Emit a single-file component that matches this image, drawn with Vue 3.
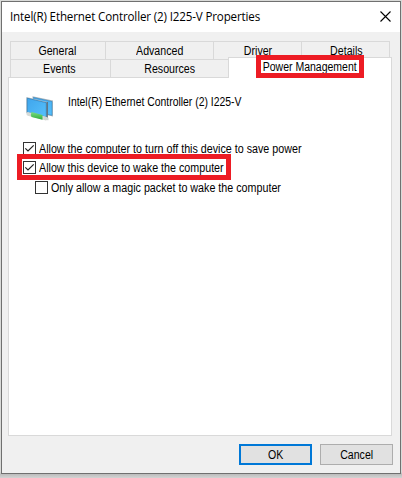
<script setup>
const backTabs = [
  { label: 'General', cls: 'general' },
  { label: 'Advanced', cls: 'advanced' },
  { label: 'Driver', cls: 'driver' },
  { label: 'Details', cls: 'details' },
]
const options = [
  { label: 'Allow the computer to turn off this device to save power', checked: true, cls: 'opt-power' },
  { label: 'Allow this device to wake the computer', checked: true, cls: 'opt-wake', marked: true },
  { label: 'Only allow a magic packet to wake the computer', checked: false, cls: 'opt-magic' },
]
</script>

<template>
  <div class="desktop">
    <div class="window">
      <header class="titlebar">
        <span class="title">Intel(R) Ethernet Controller (2) I225-V Properties</span>
        <svg class="close" width="11" height="11" viewBox="0 0 11 11">
          <path d="M.5 .5 L10.5 10.5 M10.5 .5 L.5 10.5" stroke="#000" stroke-width="1.1" fill="none" />
        </svg>
      </header>
      <div class="tabs">
        <div class="row back">
          <div v-for="t in backTabs" :key="t.label" class="tab" :class="t.cls"><span>{{ t.label }}</span></div>
        </div>
        <div class="row front">
          <div class="tab events"><span>Events</span></div>
          <div class="tab resources"><span>Resources</span></div>
          <div class="tab selected">
            <span class="power">Power Management</span>
            <i class="mark mark-tab"></i>
          </div>
        </div>
      </div>
      <main class="panel">
        <div class="device">
          <svg width="28" height="26" viewBox="0 0 28 26">
            <defs>
              <linearGradient id="scr" x1="0" y1="0" x2="1" y2="1">
                <stop offset="0" stop-color="#3fa5ec" />
                <stop offset="1" stop-color="#56c0fb" />
              </linearGradient>
              <linearGradient id="plug" x1="0" y1="0" x2="0" y2="1">
                <stop offset="0" stop-color="#7ddc83" />
                <stop offset="1" stop-color="#2fae3c" />
              </linearGradient>
            </defs>
            <path d="M6.5 .2 L27 4.6 V20.5 L7 16 Z" fill="#aab5bc" />
            <path d="M7.5 1.5 L26 5.6 V19.3 L8 15.2 Z" fill="url(#scr)" stroke="#2f86c4" stroke-width=".6" />
            <path d="M.3 1 L21.6 5.9 V22.3 L.3 17.2 Z" fill="#b5bec4" />
            <path d="M1.2 2.2 L20.3 6.7 V21 L1.2 16.4 Z" fill="url(#scr)" stroke="#287cb9" stroke-width=".7" />
            <path d="M21.2 6 V22.2" stroke="#4a5861" stroke-width="1" />
            <path d="M2.3 17.9 L19.5 22.6" stroke="#d5dad7" stroke-width="3.6" stroke-linecap="round" />
            <path d="M5.5 15.9 L16.5 18.9 V23.8 L5.5 20.9 Q4.4 18.4 5.5 15.9Z" fill="url(#plug)" />
            <path d="M18 20.5 L22.5 21.8 V24.2 L18 24Z" fill="#d0d5d2" />
          </svg>
          <span class="device-name">Intel(R) Ethernet Controller (2) I225-V</span>
        </div>
        <div class="options">
          <label v-for="o in options" :key="o.label" class="option" :class="o.cls">
            <svg class="box" width="13" height="13" viewBox="0 0 13 13">
              <rect x=".5" y=".5" width="12" height="12" fill="#fff" stroke="#333" />
              <path v-if="o.checked" d="M2.3 6.3 L5 9 L10.7 3.3" fill="none" stroke="#222" stroke-width="1.2" />
            </svg>
            <span class="text">{{ o.label }}</span>
            <i v-if="o.marked" class="mark mark-option"></i>
          </label>
        </div>
      </main>
      <footer class="actions">
        <button class="ok"><span>OK</span></button>
        <button class="cancel"><span>Cancel</span></button>
      </footer>
    </div>
  </div>
</template>

<style>
body { margin: 0; overflow: hidden; }
</style>

<style scoped>
* { box-sizing: border-box; }
.desktop {
  width: 402px; height: 478px; padding: 1px;
  background: linear-gradient(#d9dad8 0 472px, #bcbcbc 474px, #d3d3d3 478px);
  font: 12px/14px "Liberation Sans", Arial, sans-serif; color: #000; overflow: hidden;
}
.window {
  width: 400px; height: 473px; border: 1px solid #707070; background: #f0f0f0;
  display: flex; flex-direction: column;
}
.titlebar {
  height: 30px; flex: none; background: #fff; display: flex; align-items: center;
  justify-content: space-between; padding: 0 9px 0 8px;
}
.title {
  font: 12px/16px "Open Sans", "Noto Sans", sans-serif; letter-spacing: -0.15px; white-space: nowrap;
  margin-top: -1px; transform: scaleX(.966); transform-origin: left;
}
.close { flex: none; margin-top: -1px; }
.tabs { padding: 9px 8px 0; flex: none; }
.row { display: flex; }
.back { height: 18px; width: 380px; border-right: 1px solid #d9d9d9; }
.tab { border: solid #d9d9d9; border-width: 1px 0 0 1px; display: flex; justify-content: center; white-space: nowrap; }
.tab > span { margin-top: 2px; height: 14px; transform: scaleX(.885); }
.general { width: 95px; padding-right: 1px; }
.advanced { width: 108px; }
.driver { width: 88px; }
.details { width: 88px; padding-left: 2px; }
.front { height: 18px; }
.events { width: 100px; padding-right: 2px; }
.resources { width: 118px; }
.selected {
  width: 164px; height: 21px; margin: -2px -2px 0 0; flex: none; background: #fff; position: relative; z-index: 1;
  border-right-width: 1px;
}
.selected > .power { transform: scaleX(.875); }
.mark { position: absolute; border: 5px solid #ed1c24; pointer-events: none; }
.mark-tab { left: 27px; top: -3px; width: 108px; height: 23px; }
.panel { margin-left: 6px; width: 384px; height: 359px; flex: none; background: #fff; border: 1px solid #d9d9d9; }
.device { display: flex; padding: 18px 0 0 17px; height: 64px; }
.device-name { margin: -1px 0 0 14px; height: 14px; white-space: nowrap; transform: scaleX(.867); transform-origin: left; }
.options { display: flex; flex-direction: column; padding-left: 14px; }
.option { display: flex; height: 19px; position: relative; width: max-content; }
.opt-wake { height: 20px; }
.opt-magic { margin-left: 12px; }
.box { flex: none; }
.text { margin-left: 3px; height: 14px; white-space: nowrap; transform: scaleX(.893); transform-origin: left; }
.mark-option { left: -6px; top: -7px; width: 214px; height: 26px; }
.actions { display: flex; justify-content: flex-end; gap: 8px; padding: 8px 7px 0 0; }
button {
  width: 73px; height: 21px; padding: 0; background: #e1e1e1; border: 1px solid #adadad;
  font: 12px/14px "Liberation Sans", Arial, sans-serif; color: #000; display: flex; align-items: center; justify-content: center;
}
button > span { transform: scaleX(.88); }
.ok { border: 2px solid #0078d7; }
</style>
